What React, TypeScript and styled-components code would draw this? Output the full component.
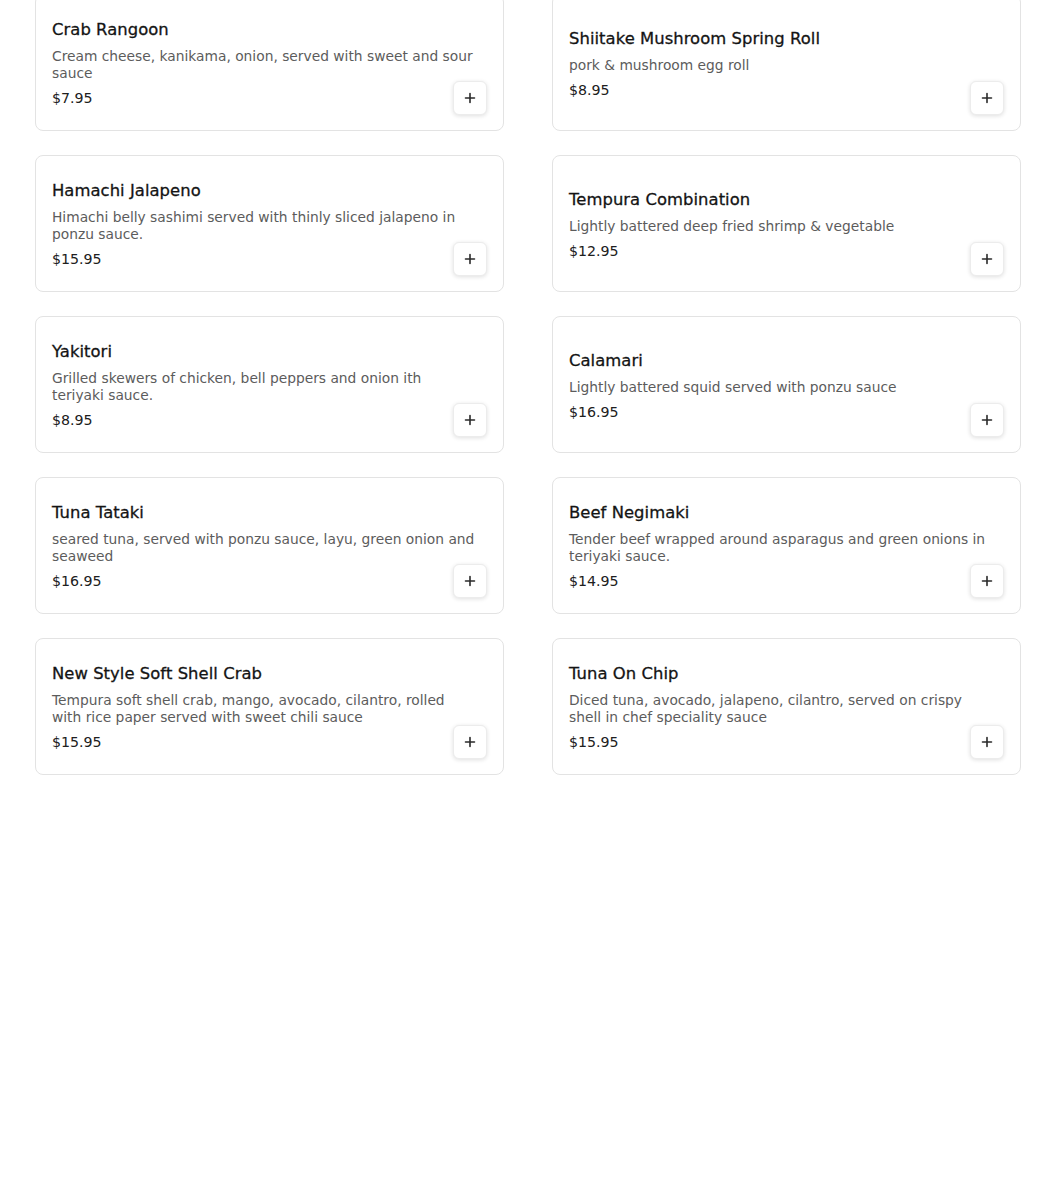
import React from "react";
import styled, { createGlobalStyle } from "styled-components";

const GlobalStyle = createGlobalStyle`
  html, body {
    margin: 0;
    padding: 0;
    background: #ffffff;
  }
  body {
    font-family: "DejaVu Sans", "Liberation Sans", sans-serif;
    color: #1c1c1c;
  }
`;

type Item = { name: string; desc: string; price: string };

const items: Item[] = [
  { name: "Crab Rangoon", desc: "Cream cheese, kanikama, onion, served with sweet and sour sauce", price: "$7.95" },
  { name: "Shiitake Mushroom Spring Roll", desc: "pork & mushroom egg roll", price: "$8.95" },
  { name: "Hamachi Jalapeno", desc: "Himachi belly sashimi served with thinly sliced jalapeno in ponzu sauce.", price: "$15.95" },
  { name: "Tempura Combination", desc: "Lightly battered deep fried shrimp & vegetable", price: "$12.95" },
  { name: "Yakitori", desc: "Grilled skewers of chicken, bell peppers and onion ith teriyaki sauce.", price: "$8.95" },
  { name: "Calamari", desc: "Lightly battered squid served with ponzu sauce", price: "$16.95" },
  { name: "Tuna Tataki", desc: "seared tuna, served with ponzu sauce, layu, green onion and seaweed", price: "$16.95" },
  { name: "Beef Negimaki", desc: "Tender beef wrapped around asparagus and green onions in teriyaki sauce.", price: "$14.95" },
  { name: "New Style Soft Shell Crab", desc: "Tempura soft shell crab, mango, avocado, cilantro, rolled with rice paper served with sweet chili sauce", price: "$15.95" },
  { name: "Tuna On Chip", desc: "Diced tuna, avocado, jalapeno, cilantro, served on crispy shell in chef speciality sauce", price: "$15.95" },
];

const Grid = styled.div`
  display: grid;
  grid-template-columns: 469px 469px;
  column-gap: 48px;
  row-gap: 24px;
  padding: 0 29px 0 35px;
  margin-top: -6px;
`;

const Card = styled.div`
  box-sizing: border-box;
  height: 137px;
  border: 1px solid #e3e3e3;
  border-radius: 8px;
  background: #fff;
  padding: 3px 16px 0;
  display: grid;
  grid-template-columns: 1fr;
  grid-template-rows: 1fr;
`;

const Info = styled.div`
  grid-area: 1 / 1;
  align-self: center;
  display: flex;
  flex-direction: column;
`;

const Title = styled.div`
  font-size: 16.4px;
  line-height: 20px;
  color: #141414;
  -webkit-text-stroke: 0.3px #141414;
  letter-spacing: 0.05px;
`;

const Desc = styled.div`
  margin-top: 8px;
  max-width: 425px;
  font-size: 13.8px;
  line-height: 17px;
  color: #5c5c5c;
`;

const Price = styled.div`
  margin-top: 6px;
  font-size: 14.2px;
  line-height: 20px;
  color: #202020;
`;

const AddButton = styled.button`
  grid-area: 1 / 1;
  justify-self: end;
  align-self: end;
  margin-bottom: 15px;
  width: 34px;
  height: 34px;
  padding: 0;
  border: 1px solid #ececec;
  border-radius: 6px;
  background: #fff;
  box-shadow: 0 1px 4px rgba(0, 0, 0, 0.13);
  display: flex;
  align-items: center;
  justify-content: center;
  cursor: pointer;
`;

const PlusIcon = () => (
  <svg width="12" height="12" viewBox="0 0 12 12" aria-hidden="true">
    <path d="M6 1.5v9M1.5 6h9" stroke="#2a2a2a" strokeWidth="1.6" strokeLinecap="round" />
  </svg>
);

export default function App() {
  return (
    <>
      <GlobalStyle />
      <Grid>
        {items.map((it) => (
          <Card key={it.name}>
            <Info>
              <Title>{it.name}</Title>
              <Desc>{it.desc}</Desc>
              <Price>{it.price}</Price>
            </Info>
            <AddButton aria-label={`Add ${it.name}`}>
              <PlusIcon />
            </AddButton>
          </Card>
        ))}
      </Grid>
    </>
  );
}
